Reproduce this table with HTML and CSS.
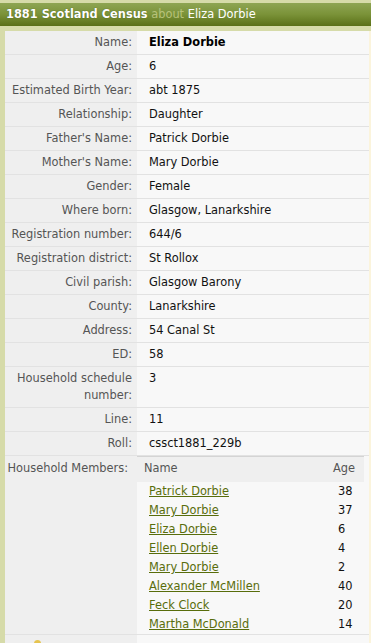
FILE: index.html
```html
<!DOCTYPE html>
<html>
<head>
<meta charset="utf-8">
<link rel="stylesheet" href="styles.css">
</head>
<body>
<div class="page">
  <div class="hdr"><span class="ttl">1881 Scotland Census</span> <span class="about">about</span> <span class="who">Eliza Dorbie</span></div>
  <div class="main">
    <table class="rec">
      <tr><th>Name:</th><td><b>Eliza Dorbie</b></td></tr>
      <tr><th>Age:</th><td>6</td></tr>
      <tr><th>Estimated Birth Year:</th><td>abt 1875</td></tr>
      <tr><th>Relationship:</th><td>Daughter</td></tr>
      <tr><th>Father's Name:</th><td>Patrick Dorbie</td></tr>
      <tr><th>Mother's Name:</th><td>Mary Dorbie</td></tr>
      <tr><th>Gender:</th><td>Female</td></tr>
      <tr><th>Where born:</th><td>Glasgow, Lanarkshire</td></tr>
      <tr><th>Registration number:</th><td>644/6</td></tr>
      <tr><th>Registration district:</th><td>St Rollox</td></tr>
      <tr><th>Civil parish:</th><td>Glasgow Barony</td></tr>
      <tr><th>County:</th><td>Lanarkshire</td></tr>
      <tr><th>Address:</th><td>54 Canal St</td></tr>
      <tr><th>ED:</th><td>58</td></tr>
      <tr><th>Household schedule number:</th><td>3</td></tr>
      <tr><th>Line:</th><td>11</td></tr>
      <tr><th>Roll:</th><td>cssct1881_229b</td></tr>
      <tr class="hm">
        <th>Household Members:</th>
        <td class="members">
          <table class="mem">
            <tr><th class="mn">Name</th><th class="ma">Age</th></tr>
            <tr><td><a href="#">Patrick Dorbie</a></td><td class="age">38</td></tr>
            <tr><td><a href="#">Mary Dorbie</a></td><td class="age">37</td></tr>
            <tr><td><a href="#">Eliza Dorbie</a></td><td class="age">6</td></tr>
            <tr><td><a href="#">Ellen Dorbie</a></td><td class="age">4</td></tr>
            <tr><td><a href="#">Mary Dorbie</a></td><td class="age">2</td></tr>
            <tr><td><a href="#">Alexander McMillen</a></td><td class="age">40</td></tr>
            <tr><td><a href="#">Feck Clock</a></td><td class="age">20</td></tr>
            <tr><td><a href="#">Martha McDonald</a></td><td class="age">14</td></tr>
          </table>
        </td>
      </tr>
      <tr class="next"><th><span class="bulb"></span></th><td></td></tr>
    </table>
  </div>
</div>
</body>
</html>
```
FILE: styles.css
```css
html, body {
  margin: 0;
  padding: 0;
}
body {
  background: #d6dba9;
  font-family: "DejaVu Sans", Verdana, sans-serif;
  font-size: 11.4px;
  overflow: hidden;
}
.page {
  padding-top: 3px;
}
.hdr {
  height: 23px;
  line-height: 23px;
  padding-left: 6px;
  background: linear-gradient(to bottom, #8ea553 0%, #7a9238 50%, #5a7017 100%);
  color: #fff;
  font-size: 11.4px;
  white-space: nowrap;
}
.ttl {
  font-weight: bold;
  text-shadow: 0 0 1px #3c4d0a;
}
.about {
  color: #b7c27a;
}
.who {
  color: #fff;
}
.main {
  margin-top: 5px;
  padding-left: 5px;
  border-right: 3px solid #fbf4dc;
}
.rec {
  width: 364px;
  border-collapse: collapse;
  border-spacing: 0;
}
.rec > tbody > tr > th,
.rec > tbody > tr > td {
  border-bottom: 1px solid #e2e2e2;
  line-height: 17px;
  padding-top: 3px;
  padding-bottom: 3px;
  vertical-align: top;
}
.rec > tbody > tr > th {
  width: 127px;
  background: #efefef;
  color: #555;
  font-weight: normal;
  text-align: right;
  padding-right: 5px;
  padding-left: 0;
}
.rec > tbody > tr > td {
  background: #f8f8f8;
  color: #111;
  padding-left: 12px;
  padding-right: 0;
}
.rec b {
  color: #000;
}
.rec > tbody > tr.hm > th {
  padding-top: 4px;
  padding-right: 9px;
  width: 123px;
}
.rec > tbody > tr.hm > td.members {
  padding: 0 5px 0 0;
}
.mem {
  width: 100%;
  border-collapse: collapse;
  border-spacing: 0;
}
.mem th {
  background: #efefef;
  border-top: 1px solid #d4d4d4;
  color: #555;
  font-weight: normal;
  line-height: 17px;
  padding: 3px 0 5px 0;
  vertical-align: middle;
}
.mem th.mn {
  text-align: left;
  padding-left: 7px;
}
.mem th.ma {
  text-align: right;
  padding-right: 9px;
  width: 21px;
}
.mem td {
  height: 19px;
  padding: 0 0 0 12px;
  line-height: 19px;
  color: #111;
  vertical-align: middle;
}
.mem td.age {
  padding-left: 5px;
}
.mem a {
  color: #586d0b;
  text-decoration: underline;
}
.rec > tbody > tr.next > th,
.rec > tbody > tr.next > td {
  height: 30px;
  border-bottom: 0;
}
.bulb {
  display: inline-block;
  vertical-align: top;
  width: 7px;
  height: 7px;
  border-radius: 50%;
  background: #e6c450;
  margin-right: 91px;
  margin-top: 2px;
}
```
